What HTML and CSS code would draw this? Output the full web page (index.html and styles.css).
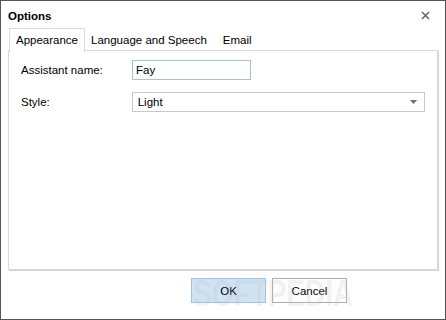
FILE: index.html
```html
<!DOCTYPE html>
<html lang="en">
<head>
    <meta charset="UTF-8">
    <title>Options</title>
    <link rel="stylesheet" href="styles.css">
</head>
<body>
    <div class="dialog">
        <div class="titlebar">
            <span class="title">Options</span>
            <svg class="close" width="9" height="9" viewBox="0 0 9 9">
                <path d="M1 1 L8 8 M8 1 L1 8" stroke="#6a6a6a" stroke-width="1.6"/>
            </svg>
        </div>
        <div class="tabs">
            <div class="tab active">Appearance</div>
            <div class="tab">Language and Speech</div>
            <div class="tab">Email</div>
        </div>
        <div class="panel">
            <div class="row">
                <label class="label">Assistant name:</label>
                <div class="input">Fay</div>
            </div>
            <div class="row">
                <label class="label">Style:</label>
                <div class="select">
                    <span>Light</span>
                    <svg width="7" height="4" viewBox="0 0 7 4"><path d="M0 0 H7 L3.5 4 Z" fill="#707070"/></svg>
                </div>
            </div>
        </div>
        <div class="buttons">
            <button class="btn default">OK</button>
            <button class="btn">Cancel</button>
        </div>
        <div class="watermark">SOFTPEDIA</div>
    </div>
</body>
</html>
```

FILE: styles.css
```css
body {
    margin: 0;
    font-family: "Liberation Sans", Arial, sans-serif;
    font-size: 11.5px;
    color: #000;
    background: #fff;
}
.dialog {
    position: relative;
    width: 446px;
    height: 320px;
    box-sizing: border-box;
    border: 1px solid #555;
    background: #fff;
    overflow: hidden;
}
.titlebar {
    height: 27px;
    display: flex;
    align-items: center;
    justify-content: space-between;
    padding: 2px 15px 0 7px;
    box-sizing: border-box;
}
.title {
    font-weight: bold;
}
.tabs {
    display: flex;
    padding-left: 8px;
    height: 22px;
}
.tab {
    padding: 0 7px;
    line-height: 22px;
    border: 1px solid transparent;
    border-bottom: none;
}
.tab.active {
    border-color: #d9d9d9;
    background: #fff;
    padding: 0 6px;
    position: relative;
    z-index: 1;
    height: 23px;
}
.tab.active + .tab {
    padding-left: 5px;
}
.panel {
    margin: 0 7px;
    height: 209px;
    border: 1px solid #d9d9d9;
    box-shadow: 1px 1px 0 #d4d4d4;
    padding: 9px 12px 0 12px;
    display: flex;
    flex-direction: column;
    gap: 12px;
}
.row {
    display: flex;
    align-items: center;
}
.label {
    width: 111px;
}
.input {
    width: 114px;
    height: 18px;
    line-height: 18px;
    border: 1px solid #a4c2de;
    padding-left: 3px;
}
.select {
    width: 280px;
    height: 18px;
    line-height: 18px;
    border: 1px solid #c8c8c8;
    padding: 0 7px 0 5px;
    display: flex;
    justify-content: space-between;
    align-items: center;
}
.buttons {
    display: flex;
    gap: 6px;
    padding: 8px 0 0 190px;
}
.btn {
    width: 75px;
    height: 25px;
    font-family: inherit;
    font-size: 11.5px;
    background: #fdfdfd;
    border: 1px solid #adadad;
    padding: 0;
}
.btn.default {
    background: #cfe3f4;
    border-color: #9dc2e2;
}
.watermark {
    position: absolute;
    left: 192px;
    top: 272px;
    font-family: "Liberation Sans", sans-serif;
    font-weight: bold;
    font-size: 28px;
    transform: scaleY(1.3);
    transform-origin: top left;
    color: rgba(190, 190, 190, 0.2);
    pointer-events: none;
}
```
